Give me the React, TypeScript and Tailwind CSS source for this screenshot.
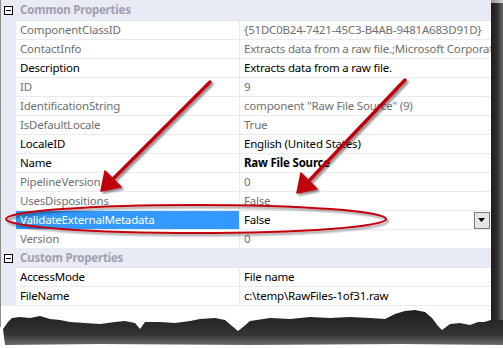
import React from "react";

type Row = { n: string; v: string; ro?: boolean; bold?: boolean; sel?: boolean };

const common: Row[] = [
  { n: "ComponentClassID", v: "{51DC0B24-7421-45C3-B4AB-9481A683D91D}", ro: true },
  { n: "ContactInfo", v: "Extracts data from a raw file.;Microsoft Corporation; Microsoft SqlServer v10", ro: true },
  { n: "Description", v: "Extracts data from a raw file." },
  { n: "ID", v: "9", ro: true },
  { n: "IdentificationString", v: 'component "Raw File Source" (9)', ro: true },
  { n: "IsDefaultLocale", v: "True", ro: true },
  { n: "LocaleID", v: "English (United States)" },
  { n: "Name", v: "Raw File Source", bold: true },
  { n: "PipelineVersion", v: "0", ro: true },
  { n: "UsesDispositions", v: "False", ro: true },
  { n: "ValidateExternalMetadata", v: "False", sel: true },
  { n: "Version", v: "0", ro: true },
];

const custom: Row[] = [
  { n: "AccessMode", v: "File name" },
  { n: "FileName", v: "c:\\temp\\RawFiles-1of31.raw" },
];

function Header({ title, tall }: { title: string; tall?: boolean }) {
  return (
    <div
      className={`flex ${tall ? "h-[21px]" : "h-[19px]"} items-center bg-[#e8eaf6] border-b border-[#e3e6f3]`}
    >
      <div className="w-[15px] flex items-center justify-center">
        <div className="w-[9px] h-[9px] border border-black bg-white flex items-center justify-center">
          <div className="w-[5px] h-px bg-black" />
        </div>
      </div>
      <div className="pl-[4px] text-[11.5px] tracking-[-0.2px] font-bold text-[#a0a0ae] leading-[18px]">
        {title}
      </div>
    </div>
  );
}

function PropRow({ r }: { r: Row }) {
  const nameColor = r.sel ? "text-white" : r.ro ? "text-[#707070]" : "text-black";
  const valColor = r.ro ? "text-[#707070]" : "text-black";
  return (
    <div className="flex h-[19px] border-b border-[#e8eaf6]">
      <div className="w-[15px] bg-[#e8eaf6]" />
      <div
        className={`w-[224px] shrink-0 border-r border-[#e8eaf6] pl-[4px] text-[11.5px] tracking-[-0.2px] leading-[18px] whitespace-nowrap ${
          r.sel ? "bg-[#3399ff]" : "bg-white"
        } ${nameColor}`}
      >
        {r.n}
      </div>
      <div
        className={`flex-1 min-w-0 pl-[4px] flex items-center text-[11.5px] tracking-[-0.2px] leading-[18px] whitespace-nowrap bg-white ${valColor} ${
          r.bold ? "font-bold" : ""
        }`}
      >
        <span className="flex-1 min-w-0 overflow-hidden">{r.v}</span>
        {r.sel && (
          <div className="w-[16px] h-[17px] mr-px border border-[#7d7d7d] bg-[#e6e6e6] flex items-center justify-center">
            <svg width="8" height="5" viewBox="0 0 8 5">
              <path d="M0 0 H7 L3.5 4 Z" fill="#000" />
            </svg>
          </div>
        )}
      </div>
    </div>
  );
}

export default function App() {
  return (
    <div
      className="relative w-[503px] h-[348px] bg-white overflow-hidden flex flex-col"
      style={{ fontFamily: '"Noto Sans", "Open Sans", sans-serif' }}
    >
      <div className="flex h-[306px]">
        <div className="w-[491px] flex flex-col border-l border-[#8c8c8c] bg-white">
          <Header title="Common Properties" tall />
          {common.map((r) => (
            <PropRow key={r.n} r={r} />
          ))}
          <Header title="Custom Properties" />
          {custom.map((r) => (
            <PropRow key={r.n} r={r} />
          ))}
        </div>
        <div className="w-[12px] flex flex-col">
          <div className="h-[3px] bg-linear-to-r from-[#9a9a9a] to-[#d0d0d0]" />
          <div className="flex-1 bg-linear-to-r from-[#1c1c1c] via-[#2e2e2e] to-[#6a6a6a]" />
        </div>
      </div>
      <svg width="503" height="42" viewBox="0 0 503 42" className="block">
        <defs>
          <linearGradient id="tornG" x1="0" y1="0" x2="0" y2="1">
            <stop offset="0" stopColor="#1e1e1e" />
            <stop offset="0.7" stopColor="#333333" />
            <stop offset="1" stopColor="#6a6a6a" />
          </linearGradient>
          <linearGradient id="rightG" x1="0" y1="0" x2="1" y2="0">
            <stop offset="0" stopColor="#1c1c1c" />
            <stop offset="0.5" stopColor="#2e2e2e" />
            <stop offset="1" stopColor="#6a6a6a" />
          </linearGradient>
        </defs>
        <rect x="491" y="0" width="12" height="37" fill="url(#rightG)" />
        <path
          d="M3 23 L8 16 L12 12 L20 11 L30 12 L40 10 L50 13 L60 14 L70 16 L85 17 L100 18 L115 16 L125 15 L135 17 L140 23 L145 16 L160 16 L175 17 L190 15 L200 13 L215 12 L225 14 L232 20 L238 25 L243 21 L250 15 L270 12 L290 13 L310 11 L330 12 L350 11 L370 12 L385 13 L395 8 L405 5 L415 4 L425 6 L432 12 L438 20 L442 24 L450 18 L460 17 L470 19 L478 16 L484 16 L491 14 L503 14 L503 39 L400 38 L250 39 L100 38 L5 39 Z"
          fill="url(#tornG)"
        />
        <line x1="0.5" y1="0" x2="0.5" y2="21" stroke="#8c8c8c" />
      </svg>

      <svg
        className="absolute inset-0 pointer-events-none"
        width="503"
        height="348"
        viewBox="0 0 503 348"
      >
        <defs>
          <filter id="sh" x="-10%" y="-10%" width="120%" height="140%">
            <feGaussianBlur in="SourceAlpha" stdDeviation="1.2" />
            <feOffset dx="2" dy="2" result="b" />
            <feComponentTransfer>
              <feFuncA type="linear" slope="0.45" />
            </feComponentTransfer>
            <feMerge>
              <feMergeNode />
              <feMergeNode in="SourceGraphic" />
            </feMerge>
          </filter>
        </defs>
        <g filter="url(#sh)">
          <ellipse cx="196" cy="219" rx="190" ry="14" fill="none" stroke="#c00010" strokeWidth="2" />
        </g>
        <g filter="url(#sh)">
          <line x1="210" y1="82" x2="110" y2="182" stroke="#c00010" strokeWidth="3.5" strokeLinecap="round" />
          <path d="M101 191 L105 171 L121 187 Z" fill="#c00010" stroke="#c00010" strokeWidth="1.5" strokeLinejoin="round" />
        </g>
        <g filter="url(#sh)">
          <line x1="405" y1="80" x2="306" y2="184" stroke="#c00010" strokeWidth="3.5" strokeLinecap="round" />
          <path d="M297 193 L301 173 L317 189 Z" fill="#c00010" stroke="#c00010" strokeWidth="1.5" strokeLinejoin="round" />
        </g>
      </svg>
    </div>
  );
}
